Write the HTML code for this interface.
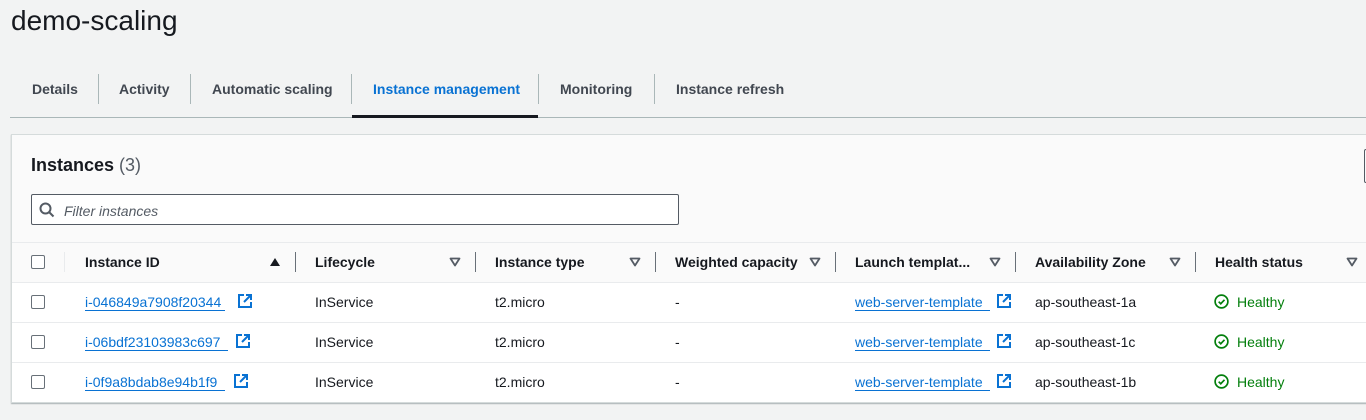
<!DOCTYPE html><html><head><style>
body{margin:0;width:1366px;height:420px;background:#f2f3f3;font-family:"Liberation Sans",Arial,sans-serif;color:#16191f;position:relative;overflow:hidden}
.a{position:absolute;white-space:nowrap}
.tab{position:absolute;top:81px;font-size:14px;font-weight:bold;color:#414750}
.sep{position:absolute;top:74px;width:1px;height:30px;background:#aab7b8}
.h{font-size:14px;font-weight:bold;top:254px}
.c{font-size:14px}
.cb{position:absolute;width:12px;height:12px;border:1.5px solid #687078;border-radius:2px;background:#fff}
.dv{position:absolute;top:252px;width:1px;height:20px;background:#687078}
.tri{position:absolute;top:257px}
.lnk{color:#0972d3;border-bottom:1px solid #0972d3;line-height:15px}
.line{position:absolute;left:12px;width:1354px;height:1px;background:#e9ebed}
</style></head><body>
<div class="a" style="left:11px;top:5px;font-size:28px;color:#16191f">demo-scaling</div>
<div class="tab" style="left:32px">Details</div>
<div class="sep" style="left:98px"></div>
<div class="tab" style="left:119px">Activity</div>
<div class="sep" style="left:190px"></div>
<div class="tab" style="left:212px">Automatic scaling</div>
<div class="sep" style="left:351px"></div>
<div class="tab" style="left:373px;color:#0972d3">Instance management</div>
<div class="sep" style="left:538px"></div>
<div class="tab" style="left:560px">Monitoring</div>
<div class="sep" style="left:654px"></div>
<div class="tab" style="left:676px">Instance refresh</div>
<div class="a" style="left:10px;top:117px;width:1356px;height:1px;background:#aab7b8"></div>
<div class="a" style="left:352px;top:115px;width:186px;height:3px;background:#16191f"></div>

<div class="a" style="left:11px;top:134px;width:1360px;height:267px;background:#fafafa;border:1px solid #d5dbdb;box-shadow:0 1px 1px rgba(0,28,36,.3)"></div>
<div class="a" style="left:12px;top:282px;width:1354px;height:120px;background:#fff"></div>
<div class="a" style="left:1364px;top:149px;width:4px;height:32px;border:1px solid #545b64;border-radius:2px"></div>
<div class="a" style="left:31px;top:155px;font-size:18px;font-weight:bold">Instances <span style="font-weight:normal;color:#545b64">(3)</span></div>
<div class="a" style="left:31px;top:194px;width:646px;height:29px;border:1px solid #545b64;border-radius:2px;background:#fff"></div>
<svg class="a" style="left:39px;top:202px" width="16" height="16" viewBox="0 0 16 16"><circle cx="6.5" cy="6.5" r="5" fill="none" stroke="#545b64" stroke-width="2"/><path d="M10 10l4.5 4.5" stroke="#545b64" stroke-width="2"/></svg>
<div class="a" style="left:64px;top:203px;font-size:14px;font-style:italic;color:#545b64">Filter instances</div>
<div class="line" style="top:242px"></div>
<div class="line" style="top:282px"></div>
<div class="line" style="top:322px"></div>
<div class="line" style="top:362px"></div>

<div class="cb" style="left:31px;top:255px"></div>
<div class="a" style="left:64px;top:252px;width:1px;height:20px;background:#e9ebed"></div>
<div class="a h" style="left:85px">Instance ID</div>
<svg class="tri" style="left:269px" width="12" height="10" viewBox="0 0 12 10"><path d="M1 9L6 1l5 8z" fill="#16191f"/></svg><div class="dv" style="left:295px"></div>
<div class="a h" style="left:315px">Lifecycle</div><svg class="tri" style="left:449px" width="12" height="10" viewBox="0 0 12 10"><path d="M1.5 1.5h9L6 8.5z" fill="none" stroke="#545b64" stroke-width="1.8" stroke-linejoin="round"/></svg><div class="dv" style="left:475px"></div>
<div class="a h" style="left:495px">Instance type</div><svg class="tri" style="left:629px" width="12" height="10" viewBox="0 0 12 10"><path d="M1.5 1.5h9L6 8.5z" fill="none" stroke="#545b64" stroke-width="1.8" stroke-linejoin="round"/></svg><div class="dv" style="left:655px"></div>
<div class="a h" style="left:675px">Weighted capacity</div><svg class="tri" style="left:809px" width="12" height="10" viewBox="0 0 12 10"><path d="M1.5 1.5h9L6 8.5z" fill="none" stroke="#545b64" stroke-width="1.8" stroke-linejoin="round"/></svg><div class="dv" style="left:835px"></div>
<div class="a h" style="left:855px">Launch templat...</div><svg class="tri" style="left:989px" width="12" height="10" viewBox="0 0 12 10"><path d="M1.5 1.5h9L6 8.5z" fill="none" stroke="#545b64" stroke-width="1.8" stroke-linejoin="round"/></svg><div class="dv" style="left:1015px"></div>
<div class="a h" style="left:1035px">Availability Zone</div><svg class="tri" style="left:1169px" width="12" height="10" viewBox="0 0 12 10"><path d="M1.5 1.5h9L6 8.5z" fill="none" stroke="#545b64" stroke-width="1.8" stroke-linejoin="round"/></svg><div class="dv" style="left:1195px"></div>
<div class="a h" style="left:1215px">Health status</div><svg class="tri" style="left:1346px" width="12" height="10" viewBox="0 0 12 10"><path d="M1.5 1.5h9L6 8.5z" fill="none" stroke="#545b64" stroke-width="1.8" stroke-linejoin="round"/></svg>

<div class="cb" style="left:31px;top:295px"></div>
<div class="a c" style="left:85px;top:294px"><span class="lnk">i-046849a7908f20344&nbsp;</span></div>
<svg class="a" style="left:238px;top:294px" width="14" height="14" viewBox="0 0 14 14"><path d="M6 1H1v12h12V8M8 1h5v5M13 1L6 8" fill="none" stroke="#0972d3" stroke-width="2"/></svg>
<div class="a c" style="left:315px;top:294px">InService</div><div class="a c" style="left:495px;top:294px">t2.micro</div><div class="a c" style="left:675px;top:294px">-</div>
<div class="a c" style="left:855px;top:294px"><span class="lnk">web-server-template&nbsp;&nbsp;</span></div>
<svg class="a" style="left:997px;top:294px" width="14" height="14" viewBox="0 0 14 14"><path d="M6 1H1v12h12V8M8 1h5v5M13 1L6 8" fill="none" stroke="#0972d3" stroke-width="2"/></svg>
<div class="a c" style="left:1035px;top:294px">ap-southeast-1a</div>
<svg class="a" style="left:1214px;top:294px" width="15" height="15" viewBox="0 0 16 16"><circle cx="8" cy="8" r="6.8" fill="none" stroke="#037f0c" stroke-width="1.8"/><path d="M5 8.2l2.2 2.2 4-4.2" fill="none" stroke="#037f0c" stroke-width="1.8"/></svg>
<div class="a c" style="left:1237px;top:294px;color:#037f0c">Healthy</div>

<div class="cb" style="left:31px;top:335px"></div>
<div class="a c" style="left:85px;top:334px"><span class="lnk">i-06bdf23103983c697&nbsp;&nbsp;</span></div>
<svg class="a" style="left:236px;top:334px" width="14" height="14" viewBox="0 0 14 14"><path d="M6 1H1v12h12V8M8 1h5v5M13 1L6 8" fill="none" stroke="#0972d3" stroke-width="2"/></svg>
<div class="a c" style="left:315px;top:334px">InService</div><div class="a c" style="left:495px;top:334px">t2.micro</div><div class="a c" style="left:675px;top:334px">-</div>
<div class="a c" style="left:855px;top:334px"><span class="lnk">web-server-template&nbsp;&nbsp;</span></div>
<svg class="a" style="left:997px;top:334px" width="14" height="14" viewBox="0 0 14 14"><path d="M6 1H1v12h12V8M8 1h5v5M13 1L6 8" fill="none" stroke="#0972d3" stroke-width="2"/></svg>
<div class="a c" style="left:1035px;top:334px">ap-southeast-1c</div>
<svg class="a" style="left:1214px;top:334px" width="15" height="15" viewBox="0 0 16 16"><circle cx="8" cy="8" r="6.8" fill="none" stroke="#037f0c" stroke-width="1.8"/><path d="M5 8.2l2.2 2.2 4-4.2" fill="none" stroke="#037f0c" stroke-width="1.8"/></svg>
<div class="a c" style="left:1237px;top:334px;color:#037f0c">Healthy</div>

<div class="cb" style="left:31px;top:375px"></div>
<div class="a c" style="left:85px;top:374px"><span class="lnk">i-0f9a8bdab8e94b1f9&nbsp;&nbsp;</span></div>
<svg class="a" style="left:234px;top:374px" width="14" height="14" viewBox="0 0 14 14"><path d="M6 1H1v12h12V8M8 1h5v5M13 1L6 8" fill="none" stroke="#0972d3" stroke-width="2"/></svg>
<div class="a c" style="left:315px;top:374px">InService</div><div class="a c" style="left:495px;top:374px">t2.micro</div><div class="a c" style="left:675px;top:374px">-</div>
<div class="a c" style="left:855px;top:374px"><span class="lnk">web-server-template&nbsp;&nbsp;</span></div>
<svg class="a" style="left:997px;top:374px" width="14" height="14" viewBox="0 0 14 14"><path d="M6 1H1v12h12V8M8 1h5v5M13 1L6 8" fill="none" stroke="#0972d3" stroke-width="2"/></svg>
<div class="a c" style="left:1035px;top:374px">ap-southeast-1b</div>
<svg class="a" style="left:1214px;top:374px" width="15" height="15" viewBox="0 0 16 16"><circle cx="8" cy="8" r="6.8" fill="none" stroke="#037f0c" stroke-width="1.8"/><path d="M5 8.2l2.2 2.2 4-4.2" fill="none" stroke="#037f0c" stroke-width="1.8"/></svg>
<div class="a c" style="left:1237px;top:374px;color:#037f0c">Healthy</div>
</body></html>
